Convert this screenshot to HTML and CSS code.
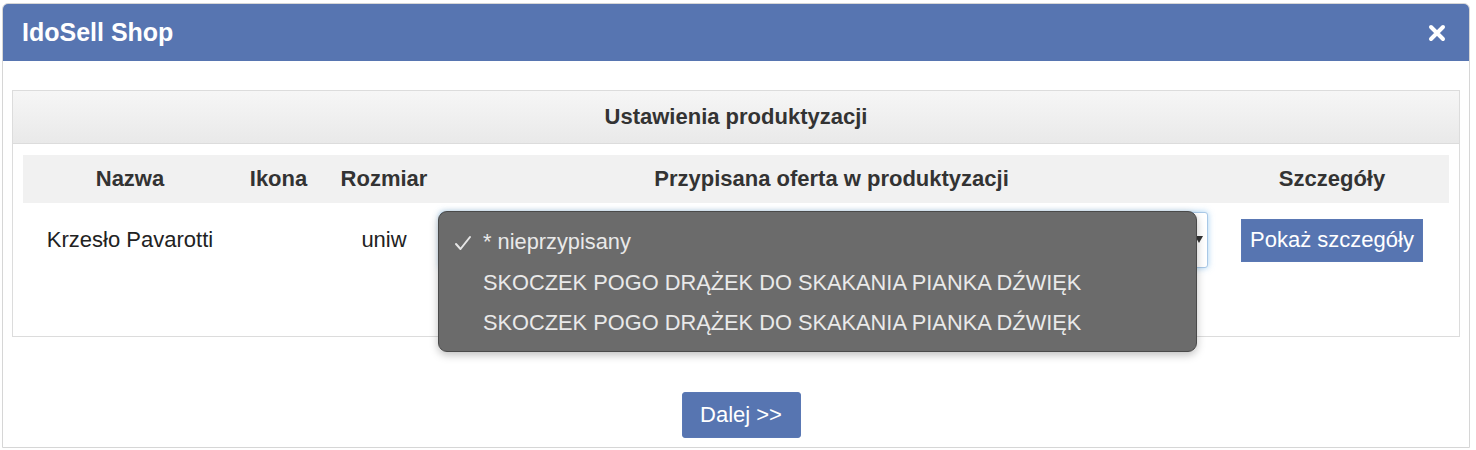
FILE: index.html
```html
<!DOCTYPE html>
<html lang="pl">

<head>
    <meta charset="UTF-8">
    <meta name="viewport" content="width=device-width, initial-scale=1.0">
    <title>IdoSell Shop</title>
    <link rel="stylesheet" href="styles.css">
</head>

<body>
    <div class="dialog">
        <div class="dialog-title">
            <span>IdoSell Shop</span>
            <svg class="close" width="18" height="18" viewBox="0 0 18 18">
                <path d="M3 3 L15 15 M15 3 L3 15" stroke="#fff" stroke-width="4" stroke-linecap="round" />
            </svg>
        </div>

        <div class="dialog-body">
            <!-- Settings panel -->
            <div class="panel">
                <div class="panel-heading">Ustawienia produktyzacji</div>
                <div class="panel-body">
                    <table class="prod-table">
                        <thead>
                            <tr>
                                <th class="col-name">Nazwa</th>
                                <th class="col-icon">Ikona</th>
                                <th class="col-size">Rozmiar</th>
                                <th class="col-offer">Przypisana oferta w produktyzacji</th>
                                <th>Szczegóły</th>
                            </tr>
                        </thead>
                        <tbody>
                            <tr>
                                <td><div class="cell">Krzesło Pavarotti</div></td>
                                <td><div class="cell"></div></td>
                                <td><div class="cell">uniw</div></td>
                                <td>
                                    <div class="select-wrap">
                                        <div class="fake-select">
                                            <span class="arrow"></span>
                                        </div>
                                        <ul class="select-menu">
                                            <li class="checked">
                                                <svg class="tick" width="18" height="16" viewBox="0 0 18 16">
                                                    <polyline points="2,9 6.5,14 16,2" fill="none" stroke="#e6e6e6" stroke-width="2" stroke-linecap="round" stroke-linejoin="round" />
                                                </svg>
                                                * nieprzypisany
                                            </li>
                                            <li>SKOCZEK POGO DRĄŻEK DO SKAKANIA PIANKA DŹWIĘK</li>
                                            <li>SKOCZEK POGO DRĄŻEK DO SKAKANIA PIANKA DŹWIĘK</li>
                                        </ul>
                                    </div>
                                </td>
                                <td><div class="cell"><button class="btn">Pokaż szczegóły</button></div></td>
                            </tr>
                        </tbody>
                    </table>
                </div>
            </div>

            <div class="actions">
                <button class="btn btn-next">Dalej &gt;&gt;</button>
            </div>
        </div>
    </div>
</body>

</html>
```

FILE: styles.css
```css
body {
    font-family: "Liberation Sans", Arial, sans-serif;
    margin: 0;
    background: #fff;
    color: #222;
}

.dialog {
    margin: 3px 6px 0 2px;
    height: 445px;
    border: 1px solid #d6d6d6;
    border-radius: 6px 6px 0 0;
    box-sizing: border-box;
    background: #fff;
}

.dialog-title {
    height: 57px;
    background: #5775b1;
    border-radius: 5px 5px 0 0;
    color: #fff;
    font-size: 25px;
    font-weight: bold;
    display: flex;
    align-items: center;
    justify-content: space-between;
    padding: 0 23px 0 19px;
}

.dialog-body {
    padding: 29px 9px 0 9px;
}

.panel {
    border: 1px solid #dcdcdc;
}

.panel-heading {
    height: 52px;
    line-height: 52px;
    text-align: center;
    font-size: 22px;
    font-weight: bold;
    color: #333;
    background: linear-gradient(#f6f6f6, #e9e9e9);
    border-bottom: 1px solid #dcdcdc;
}

.panel-body {
    padding: 11px 10px 10px 10px;
}

.prod-table {
    width: 100%;
    border-collapse: collapse;
    font-size: 22px;
}

.prod-table th {
    height: 48px;
    padding: 0;
    background: #f1f1f1;
    color: #333;
    font-weight: bold;
}

.col-name {
    width: 214px;
}

.col-icon {
    width: 83px;
}

.col-size {
    width: 128px;
}

.col-offer {
    width: 767px;
}

.prod-table td {
    height: 123px;
    padding: 9px 0 0 0;
    vertical-align: top;
    text-align: center;
    box-sizing: border-box;
}

.cell {
    height: 56px;
    display: flex;
    align-items: center;
    justify-content: center;
}

.select-wrap {
    position: relative;
    margin: 0 7px 0 -8px;
}

.fake-select {
    height: 56px;
    border: 1px solid #a9c8e6;
    border-radius: 3px;
    box-shadow: 0 0 6px rgba(102, 175, 233, 0.6);
    background: #fff;
    box-sizing: border-box;
}

.arrow {
    position: absolute;
    right: 5px;
    top: 24px;
    border-left: 4px solid transparent;
    border-right: 4px solid transparent;
    border-top: 7px solid #333;
}

/* open native-looking dropdown */
.select-menu {
    position: absolute;
    left: -2px;
    top: -1px;
    width: 759px;
    height: 141px;
    margin: 0;
    padding: 10px 0 0 0;
    list-style: none;
    box-sizing: border-box;
    background: #6b6b6b;
    border: 1px solid #4a4a4a;
    border-radius: 9px;
    box-shadow: 0 3px 8px rgba(0, 0, 0, 0.25);
    text-align: left;
}

.select-menu li {
    height: 40.5px;
    line-height: 40px;
    padding-left: 44px;
    color: #e9e9e9;
    font-size: 21.8px;
    position: relative;
}

.tick {
    position: absolute;
    left: 15px;
    top: 13px;
}

.btn {
    font-family: "Liberation Sans", Arial, sans-serif;
    font-size: 22px;
    color: #fff;
    background: #5775b1;
    border: 1px solid #5a78b4;
    padding: 0 8px;
    height: 43px;
    cursor: pointer;
}

.btn:hover {
    background: #4a67a0;
}

.actions {
    margin-top: 55px;
    text-align: center;
    padding-left: 10px;
}

.btn-next {
    width: 119px;
    height: 46px;
    border-radius: 3px;
    padding: 0;
}
```
